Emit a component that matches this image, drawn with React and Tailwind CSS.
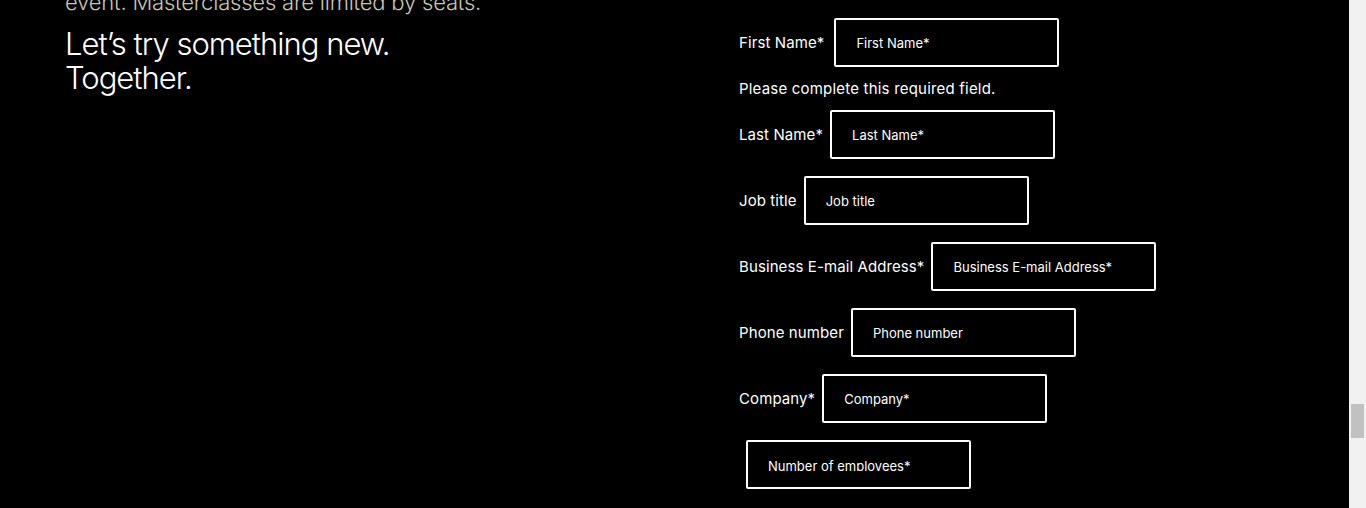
import React from "react";

const FONT = "font-['Inter','Liberation_Sans',sans-serif]";

const FIELDS = [
  { label: "Last Name*", placeholder: "Last Name*" },
  { label: "Job title", placeholder: "Job title" },
  { label: "Business E-mail Address*", placeholder: "Business E-mail Address*" },
  { label: "Phone number", placeholder: "Phone number" },
  { label: "Company*", placeholder: "Company*" },
];

function Field({ label, placeholder, first }) {
  return (
    <div className={`flex items-center ${first ? "gap-[10px]" : "gap-[7px]"}`}>
      <label className="text-[15px] leading-[18px] text-white tracking-[0.1px]">{label}</label>
      <input
        type="text"
        placeholder={placeholder}
        className="w-[225px] h-[49px] border-2 border-white rounded-[2px] bg-black pl-[20px] text-[13px] text-white placeholder:text-white outline-none"
      />
    </div>
  );
}

export default function App() {
  return (
    <div className={`flex h-[508px] w-full overflow-hidden bg-black ${FONT}`}>
      <div className="flex flex-1">
        {/* Left intro */}
        <div className="w-[739px] pl-[65px]">
          <p className="-mt-[12px] text-[22px] leading-[28px] text-[#c9c5b3] font-light tracking-[-0.2px]">
            event. Masterclasses are limited by seats.
          </p>
          <h2 className="mt-[11px] text-[31px] leading-[34px] font-light text-white tracking-[-1px]">
            Let’s try something new.
            <br />
            Together.
          </h2>
        </div>

        {/* Form */}
        <form className="flex flex-col pt-[18px]">
          <Field label="First Name*" placeholder="First Name*" first />
          <p className="mt-[13px] mb-[12px] text-[15px] leading-[18px] text-white tracking-[0.2px]">
            Please complete this required field.
          </p>
          <div className="flex flex-col gap-[17px]">
            {FIELDS.map((f) => (
              <Field key={f.label} {...f} />
            ))}
            <div className="ml-[7px] w-[225px] h-[49px] border-2 border-white rounded-[2px] pl-[20px] pt-[16px]">
              <div className="h-[13px] overflow-hidden text-[13px] leading-[16px] text-white">
                Number of employees*
              </div>
            </div>
          </div>
        </form>
      </div>

      {/* Scrollbar */}
      <div className="w-[17px] h-full bg-[#f1f1f1] pt-[404px] px-[2px]">
        <div className="h-[34px] bg-[#c1c1c1]" />
      </div>
    </div>
  );
}
